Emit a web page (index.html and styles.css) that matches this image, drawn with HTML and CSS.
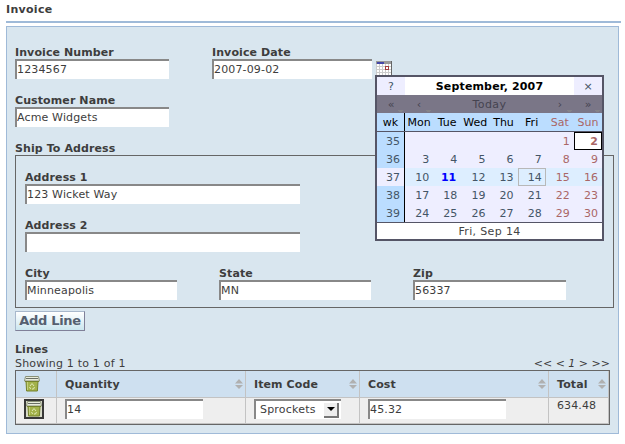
FILE: index.html
```html
<!DOCTYPE html>
<html lang="en">
<head>
<meta charset="utf-8">
<title>Invoice</title>
<link rel="stylesheet" href="styles.css">
</head>
<body>
<svg width="0" height="0" class="defs">
  <symbol id="bin" viewBox="0 0 16 16">
    <path d="M2 5h12l-.6 10H2.600z" fill="#a3b24a" stroke="#75822c"/>
    <path d="M3.500 6v8" stroke="#c3cf7c"/>
    <path d="M1.500 .5h13l1 4.500H.5z" fill="#e9ecdc" stroke="#8a9178"/>
    <path d="M2 2.500h12" stroke="#6a6f66" stroke-width="1"/>
    <path d="M1 5.500h14" stroke="#75822c"/>
    <path d="M6 10l2-2.500L10 10M10.500 11l-1 2H8M6.700 13l-1.200-2" fill="none" stroke="#dfe8b4"/>
  </symbol>
  <symbol id="sort" viewBox="0 0 8 10">
    <path d="M0 4.500L4 0l4 4.500zM0 6h8L4 10z" fill="#b0b0b0"/>
  </symbol>
</svg>
<h1 class="title">Invoice</h1>
<form class="panel">
  <div class="row">
    <label class="field number"><b>Invoice Number</b><input value="1234567"></label>
    <label class="field date"><b>Invoice Date</b><input value="2007-09-02"></label>
    <div class="picker">
      <svg class="cal-icon" width="16" height="15" viewBox="0 0 16 15" shape-rendering="crispEdges">
        <path fill="#fff" d="M0 0h16v15H0z"/>
        <path d="M3.500 3v12M6.500 3v12M9.500 3v12M12.500 3v12M0 5.500h15M0 8.500h15M0 11.500h15M.5 3v12" stroke="#ccc"/>
        <path fill="#999" d="M0 0h16v3H0z"/><path fill="#4448a8" d="M1 1h7v2H1z"/>
        <path d="M15.500 0v15" stroke="#666"/>
        <path d="M9.500 5.500h3v3h-3z" fill="#fff" stroke="#a33c3c"/>
      </svg>
      <div class="calendar">
        <div class="cal-title"><span class="help">?</span><b>September, 2007</b><span class="close">×</span></div>
        <div class="cal-nav"><span class="more">«</span><span class="more">‹</span><span class="today">Today</span><span class="more">›</span><span class="more">»</span></div>
        <div class="grid days"><span class="wk">wk</span><span>Mon</span><span>Tue</span><span>Wed</span><span>Thu</span><span>Fri</span><span class="we">Sat</span><span class="we">Sun</span></div>
        <div class="grid"><span class="wk">35</span><span></span><span></span><span></span><span></span><span></span><span class="we">1</span><span class="we selected">2</span></div>
        <div class="grid"><span class="wk">36</span><span>3</span><span>4</span><span>5</span><span>6</span><span>7</span><span class="we">8</span><span class="we">9</span></div>
        <div class="grid hover"><span class="wk">37</span><span>10</span><span class="now">11</span><span>12</span><span>13</span><span class="over">14</span><span class="we">15</span><span class="we">16</span></div>
        <div class="grid"><span class="wk">38</span><span>17</span><span>18</span><span>19</span><span>20</span><span>21</span><span class="we">22</span><span class="we">23</span></div>
        <div class="grid"><span class="wk">39</span><span>24</span><span>25</span><span>26</span><span>27</span><span>28</span><span class="we">29</span><span class="we">30</span></div>
        <div class="cal-foot">Fri, Sep 14</div>
      </div>
    </div>
  </div>
  <div class="row"><label class="field number"><b>Customer Name</b><input value="Acme Widgets"></label></div>
  <b class="section">Ship To Address</b>
  <div class="address">
    <label class="field wide"><b>Address 1</b><input value="123 Wicket Way"></label>
    <label class="field wide"><b>Address 2</b><input value=""></label>
    <div class="places">
      <label class="field"><b>City</b><input value="Minneapolis"></label>
      <label class="field"><b>State</b><input value="MN"></label>
      <label class="field"><b>Zip</b><input value="56337"></label>
    </div>
  </div>
  <button type="button" class="add">Add Line</button>
  <b class="section">Lines</b>
  <div class="status"><span>Showing 1 to 1 of 1</span><i>&lt;&lt; &lt; 1 &gt; &gt;&gt;</i></div>
  <div class="table">
    <div class="tr head">
      <div class="icon"><svg width="16" height="16"><use href="#bin"/></svg></div>
      <div><b>Quantity</b><svg class="sort" width="8" height="10"><use href="#sort"/></svg></div>
      <div><b>Item Code</b><svg class="sort" width="8" height="10"><use href="#sort"/></svg></div>
      <div><b>Cost</b><svg class="sort" width="8" height="10"><use href="#sort"/></svg></div>
      <div><b>Total</b><svg class="sort" width="8" height="10"><use href="#sort"/></svg></div>
    </div>
    <div class="tr body">
      <div class="icon"><span class="bin-button"><svg width="16" height="16"><use href="#bin"/></svg></span></div>
      <div><input value="14"></div>
      <div><span class="select">Sprockets<span class="arrow"><svg width="8" height="4"><path d="M0 0h8L4 4z"/></svg></span></span></div>
      <div><input value="45.32"></div>
      <div class="total">634.48</div>
    </div>
  </div>
</form>
</body>
</html>
```

FILE: styles.css
```css
* { box-sizing: border-box; }
body {
  margin: 0;
  padding: 2px 0 0 6px;
  background: #fff;
  color: #3d3d3d;
  font: 11px/14px "DejaVu Sans", Verdana, sans-serif;
  letter-spacing: 0.1px;
}
.defs { position: absolute; }
.title {
  width: 615px;
  height: 21px;
  margin: 0 0 3px;
  border-bottom: 2px solid #9fbad8;
  font-size: 11px;
  line-height: 16px;
  letter-spacing: 0.3px;
}
.panel {
  width: 613px;
  height: 408px;
  padding: 18px 8px 0;
  border: 1px solid #9fbad8;
  background: #d9e6ef;
}
.row { display: flex; height: 48px; }
.field { display: block; }
.field b { display: block; height: 14px; line-height: 16px; }
input {
  display: block;
  width: 100%;
  height: 20px;
  margin: 0;
  padding: 0 0 1px;
  border: 0 solid #888;
  border-width: 2px 0 0 2px;
  border-radius: 0;
  background: #fff;
  color: #3d3d3d;
  font: inherit;
  letter-spacing: 0.15px;
  outline: 0;
}
.number { width: 154px; margin-right: 43px; }
.date { width: 160px; }
.picker { position: relative; margin: 16px 0 0 4px; }
.cal-icon { display: block; }
.calendar {
  position: absolute;
  z-index: 2;
  top: 14px;
  left: -1px;
  width: 229px;
  height: 166px;
  border: 2px solid #556;
  background: #fff;
  color: #456;
  line-height: 20px;
  letter-spacing: 0;
}
.cal-title { display: flex; height: 18px; text-align: center; }
.cal-title b { flex: 1; color: #000; letter-spacing: 0.15px; }
.help, .close { width: 28px; background: #eef; }
.cal-nav {
  display: grid;
  grid-template-columns: 28px 28px 1fr 28px 28px;
  height: 18px;
  background: #7a7687;
  color: #454350;
  text-align: center;
}
.today { letter-spacing: 0.4px; }
.more {
  background: linear-gradient(#858388, #858388) right 3px bottom 3px / 3px 1px no-repeat,
    linear-gradient(#858388, #858388) right 2px bottom 4px / 5px 1px no-repeat;
}
.grid {
  display: grid;
  grid-template-columns: 28px repeat(7, 1fr);
  height: 18px;
  background: #eef;
  text-align: right;
}
.grid span { height: 18px; padding-right: 4px; }
.grid .wk { padding-right: 4px; border-right: 1px solid #000; background: #bdf; }
.days { height: 19px; border-bottom: 1px solid #556; background: #bdf; color: #000; text-align: center; }
.days span, .grid.days .wk { padding: 0; }
.grid .we { color: #a66; }
.hover { background: #def; }
.grid.hover .wk { background: #eef; }
.grid .selected { padding-right: 3px; border: 1px solid #000; background: #fff; font-weight: bold; line-height: 18px; }
.grid .over { padding-right: 3px; border: 1px solid #b8b8b8; line-height: 18px; }
.grid .now { padding-right: 5px; color: #00f; font-weight: bold; }
.cal-foot {
  height: 17px;
  border-top: 1px solid #556;
  color: #444;
  line-height: 18px;
  letter-spacing: 0.35px;
  text-align: center;
}
.section { display: block; height: 14px; line-height: 16px; }
.address {
  width: 599px;
  height: 153px;
  padding: 14px 9px 0;
  border: 1px solid #666;
}
.wide { width: 275px; height: 48px; }
.places { display: grid; grid-template-columns: 152px 152px 153px; gap: 42px; }
.add {
  display: block;
  width: 70px;
  height: 20px;
  margin: 3px 0 11px;
  padding: 0;
  border: 1px solid #808098;
  border-top-color: #a8b8cc;
  border-left-color: #a8b8cc;
  border-radius: 0;
  background: linear-gradient(#fff, #cbe6ef);
  color: #556070;
  font: bold 13px/16px "DejaVu Sans", sans-serif;
  letter-spacing: -0.3px;
}
.status {
  display: flex;
  justify-content: space-between;
  width: 595px;
  height: 14px;
  line-height: 16px;
  letter-spacing: 0.2px;
}
.status i { letter-spacing: 0; }
.table { width: 595px; height: 55px; border: 1px solid #666; }
.tr {
  display: grid;
  grid-template-columns: 41px 189px 114px 189px 1fr;
  height: 26px;
  background: #eee;
}
.tr > div { display: flex; align-items: center; padding: 0 2px 0 8px; border: 0 solid #c3c3c3; border-width: 0 1px 1px 0; }
.head { height: 27px; background: #cee0f0; }
.head > div { justify-content: space-between; }
.head b { padding-top: 2px; }
.body > div { align-items: flex-start; padding-top: 1px; }
.tr input { width: 138px; }
.bin-button { display: flex; padding: 2px; background: linear-gradient(#d8dbc9, #d8dbc9) center / 16px 16px no-repeat #383838; }
.select {
  display: flex;
  align-items: center;
  justify-content: space-between;
  width: 87px;
  height: 20px;
  padding: 0 2px 0 4px;
  border: 0 solid #888;
  border-width: 2px 0 0 2px;
  background: #fff;
  letter-spacing: 0.2px;
}
.arrow { display: grid; place-items: center; width: 15px; height: 15px; border: 0 solid #777; border-width: 0 2px 2px 0; background: #eee; }
```
